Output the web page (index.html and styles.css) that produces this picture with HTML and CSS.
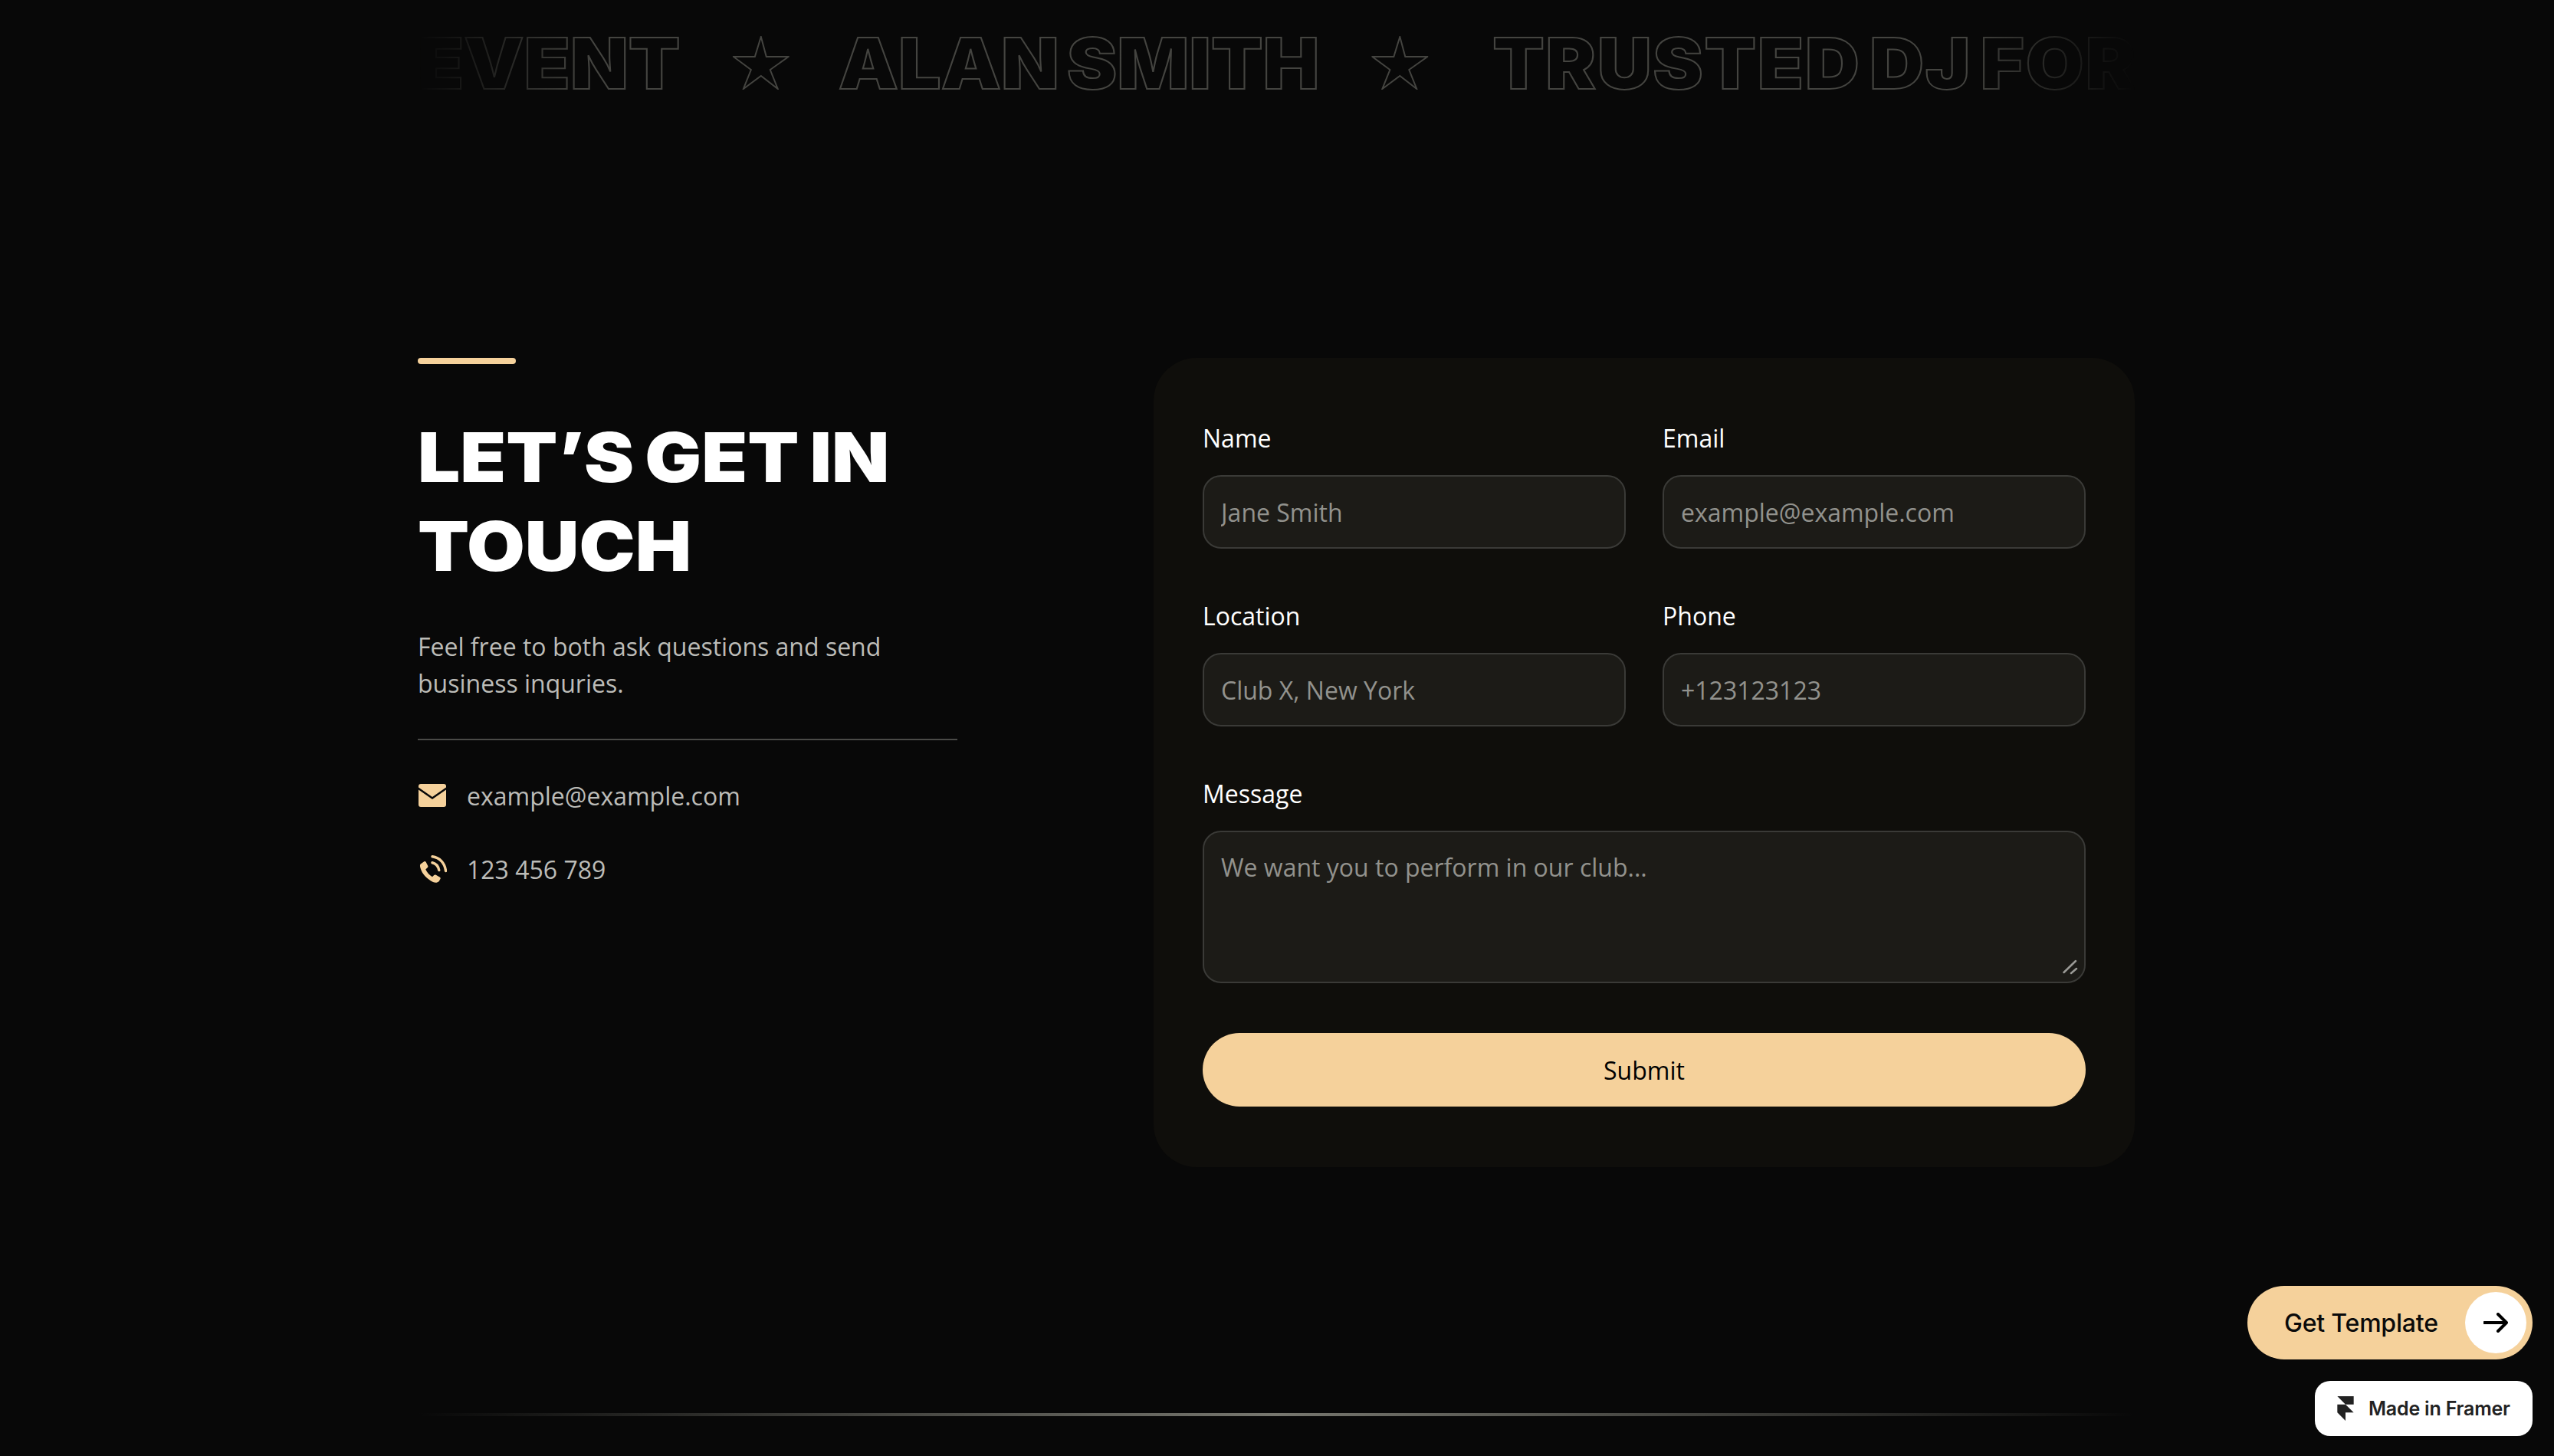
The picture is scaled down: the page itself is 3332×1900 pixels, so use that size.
FILE: index.html
```html
<!DOCTYPE html>
<html lang="en">
<head>
  <meta charset="UTF-8" />
  <title>Contact</title>
  <link rel="stylesheet" href="styles.css">
</head>
<body>

  <div class="page">

    <!-- Scrolling text, caught mid way -->
    <div class="marquee">
      <div class="marquee-track">
        <span class="marquee-text">EVENT</span>
        <svg class="star" viewBox="0 0 74 70" preserveAspectRatio="none"><polygon points="37,1 44,27 73,27 49,44 59,69 37,52 14,69 24,44 1,27 29,27"/></svg>
        <span class="marquee-text marquee-name">ALAN SMITH</span>
        <svg class="star" viewBox="0 0 74 70" preserveAspectRatio="none"><polygon points="37,1 44,27 73,27 49,44 59,69 37,52 14,69 24,44 1,27 29,27"/></svg>
        <span class="marquee-text marquee-last">TRUSTED DJ FOR</span>
      </div>
    </div>

    <div class="contact">
      <div class="contact-info">
        <div class="accent-bar"></div>
        <h1>LET’S GET IN TOUCH</h1>
        <p class="intro">Feel free to both ask questions and send business inquries.</p>
        <div class="divider"></div>
        <div class="contact-row">
          <svg class="contact-icon" viewBox="0 0 38 30"><path d="M4 0h30a3 3 0 0 1 3 3v1.500L19 17 1 4.500V3a3 3 0 0 1 3-3z"/><path d="M1 7.500L19 20 37 7.500V27a3 3 0 0 1-3 3H4a3 3 0 0 1-3-3z"/></svg>
          <span>example@example.com</span>
        </div>
        <div class="contact-row">
          <svg class="contact-icon" viewBox="-2 0 38 37"><path d="M1 12L6 8.500c1-.6 1.800-.3 2.400.6l2.600 5c.5 1 .3 1.900-.5 2.500L8 19c1.800 4 5 7.500 9 10l2.300-2.200c.8-.7 1.700-.8 2.600-.3l5.300 3c1 .7 1.100 1.700.4 2.700L26 35c-2 2-5 2.300-8 1C10 32 3 25 1 17c-.5-2-.8-3.500 0-5z"/><path class="phone-wave" d="M17 10c4.500 1 8 5 9 10M17 1.800C27 3 34 11 35 21"/></svg>
          <span>123 456 789</span>
        </div>
      </div>

      <form class="contact-form">
        <div class="field">
          <label for="name">Name</label>
          <input id="name" type="text" placeholder="Jane Smith">
        </div>
        <div class="field">
          <label for="email">Email</label>
          <input id="email" type="text" placeholder="example@example.com">
        </div>
        <div class="field">
          <label for="location">Location</label>
          <input id="location" type="text" placeholder="Club X, New York">
        </div>
        <div class="field">
          <label for="phone">Phone</label>
          <input id="phone" type="text" placeholder="+123123123">
        </div>
        <div class="field field-wide">
          <label for="message">Message</label>
          <div class="textarea-wrap">
            <textarea id="message" placeholder="We want you to perform in our club..."></textarea>
            <svg class="resize-grip" viewBox="0 0 20 20"><path d="M1.500 17L17 2M11 18l7-6"/></svg>
          </div>
        </div>
        <button class="submit" type="button">Submit</button>
      </form>
    </div>

    <div class="footer-line"></div>
  </div>

  <!-- Floating badges -->
  <a class="get-template" href="#">
    Get Template
    <span class="arrow-circle">
      <svg viewBox="0 0 32 26"><path d="M1 13h29M19 2l11 11-11 11"/></svg>
    </span>
  </a>
  <a class="made-in" href="#">
    <svg viewBox="0 0 14 21"><path d="M0 0h14v7H7zM0 7h7l7 7H7v7l-7-7z"/></svg>
    Made in Framer
  </a>

</body>
</html>
```

FILE: styles.css
```css
body {
  margin: 0;
  height: 1900px;
  overflow: hidden;
  background-color: #080808;
  color: #fff;
  font-family: 'Open Sans', sans-serif;
  font-size: 32px;
}

.page {
  width: 2240px;
  margin-left: 545px;
}

.marquee {
  height: 164px;
  overflow: hidden;
  -webkit-mask-image: linear-gradient(to right, transparent 0, #000 224px, #000 2016px, transparent 100%);
  mask-image: linear-gradient(to right, transparent 0, #000 224px, #000 2016px, transparent 100%);
}

.marquee-track {
  display: flex;
  align-items: center;
  gap: 64px;
  height: 164px;
  white-space: nowrap;
  transform: scaleX(1.07);
  transform-origin: left center;
}

.marquee-text {
  font-family: 'Inter', sans-serif;
  font-weight: 900;
  font-size: 92px;
  word-spacing: -9px;
  color: transparent;
  -webkit-text-stroke: 2px #444440;
}

.marquee-name {
  margin-left: -4px;
}

.marquee-last {
  margin-left: 14px;
  letter-spacing: 1.5px;
}

.star {
  flex: none;
  width: 69px;
  height: 70px;
  fill: none;
  stroke: #444440;
  stroke-width: 2;
}

.contact {
  display: flex;
  justify-content: space-between;
  margin-top: 303px;
}

.contact-info {
  width: 704px;
}

.accent-bar {
  width: 128px;
  height: 8px;
  border-radius: 4px;
  background-color: #f5d19b;
}

h1 {
  margin: 64px 0 0 0;
  font-family: 'Inter', sans-serif;
  font-weight: 900;
  font-size: 89px;
  line-height: 116px;
  word-spacing: -5px;
  color: #fff;
  transform: scaleX(1.1);
  transform-origin: left center;
}

.intro {
  margin: 49px 0 0 0;
  line-height: 48px;
  color: #bcbcb8;
}

.divider {
  height: 2px;
  margin-top: 48px;
  background-color: #4a4a47;
}

.contact-row {
  display: flex;
  align-items: center;
  gap: 26px;
  height: 48px;
  margin-top: 48px;
  color: #bcbcb8;
}

.contact-icon {
  flex: none;
  width: 38px;
  height: 36px;
  fill: #f5d19b;
}

.phone-wave {
  fill: none;
  stroke: #f5d19b;
  stroke-width: 3.500;
  stroke-linecap: round;
}

.contact-form {
  box-sizing: border-box;
  width: 1280px;
  height: 1056px;
  padding: 83px 64px 0 64px;
  display: grid;
  grid-template-columns: 1fr 1fr;
  column-gap: 48px;
  row-gap: 66px;
  align-content: start;
  border-radius: 56px;
  background-color: #0f0e0b;
}

.field {
  display: flex;
  flex-direction: column;
  gap: 26px;
}

.field-wide,
.submit {
  grid-column: 1 / 3;
}

label {
  line-height: 44px;
}

input,
textarea {
  box-sizing: border-box;
  width: 100%;
  padding: 0 22px;
  font-family: inherit;
  font-size: 32px;
  color: #fff;
  background-color: #1c1b17;
  border: 2px solid #3a3a37;
  border-radius: 24px;
  outline: none;
}

input {
  height: 96px;
}

.textarea-wrap {
  position: relative;
}

textarea {
  display: block;
  height: 199px;
  padding-top: 24px;
  line-height: 44px;
  resize: none;
}

.resize-grip {
  position: absolute;
  right: 10px;
  bottom: 11px;
  width: 20px;
  height: 20px;
  fill: none;
  stroke: #9a9a96;
  stroke-width: 2.500;
  stroke-linecap: round;
}

input::placeholder,
textarea::placeholder {
  color: #92928d;
}

.submit {
  height: 96px;
  margin-top: -1px;
  border: none;
  border-radius: 48px;
  font-family: inherit;
  font-size: 32px;
  font-weight: 500;
  color: #000;
  background-color: #f5d19b;
}

.footer-line {
  height: 4px;
  margin-top: 321px;
  background: linear-gradient(to right, transparent, #77776f 50%, transparent);
}

.get-template {
  position: fixed;
  right: 28px;
  bottom: 126px;
  box-sizing: border-box;
  display: flex;
  align-items: center;
  justify-content: space-between;
  width: 372px;
  height: 96px;
  padding: 0 8px 0 48px;
  border-radius: 48px;
  background-color: #f5d19b;
  color: #0a0a0a;
  font-family: 'Inter', sans-serif;
  font-weight: 500;
  font-size: 32px;
  letter-spacing: -0.2px;
  text-decoration: none;
}

.arrow-circle {
  display: flex;
  align-items: center;
  justify-content: center;
  width: 80px;
  height: 80px;
  border-radius: 50%;
  background-color: #fff;
}

.arrow-circle svg {
  width: 32px;
  height: 26px;
  fill: none;
  stroke: #000;
  stroke-width: 4;
  stroke-linecap: round;
  stroke-linejoin: round;
}

.made-in {
  position: fixed;
  right: 28px;
  bottom: 26px;
  box-sizing: border-box;
  display: flex;
  align-items: center;
  gap: 19px;
  width: 284px;
  height: 72px;
  padding-left: 29px;
  border-radius: 20px;
  background-color: #fff;
  color: #222;
  font-family: 'Inter', sans-serif;
  font-weight: 600;
  font-size: 25px;
  letter-spacing: -0.2px;
  text-decoration: none;
}

.made-in svg {
  width: 22px;
  height: 32px;
  fill: #222;
}
```
